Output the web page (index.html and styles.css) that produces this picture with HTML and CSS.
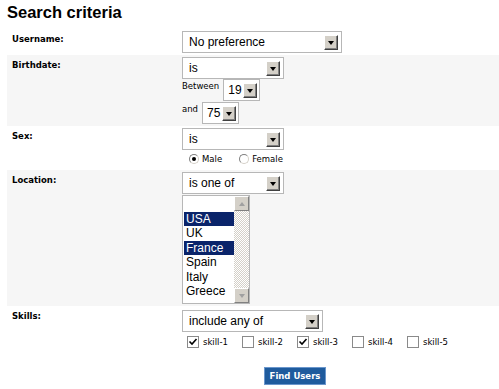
FILE: index.html
```html
<!DOCTYPE html>
<html lang="en">
<head>
  <meta charset="UTF-8">
  <title>Search criteria</title>
  <link rel="stylesheet" href="styles.css">
</head>
<body>
  <h1 class="title">Search criteria</h1>

  <table class="criteria">
    <tr>
      <th class="label">Username:</th>
      <td class="field">
        <div class="select wide"><span class="value">No preference</span><span class="arrow"></span></div>
      </td>
    </tr>
    <tr class="alt">
      <th class="label">Birthdate:</th>
      <td class="field">
        <div class="select mid"><span class="value">is</span><span class="arrow"></span></div>
        <div class="range">
          <span class="small">Between</span>
          <div class="select tiny"><span class="value">19</span><span class="arrow"></span></div>
        </div>
        <div class="range last">
          <span class="small">and</span>
          <div class="select tiny"><span class="value">75</span><span class="arrow"></span></div>
        </div>
      </td>
    </tr>
    <tr>
      <th class="label">Sex:</th>
      <td class="field">
        <div class="select mid"><span class="value">is</span><span class="arrow"></span></div>
        <div class="choices">
          <label class="choice"><span class="radio checked"></span>Male</label>
          <label class="choice"><span class="radio"></span>Female</label>
        </div>
      </td>
    </tr>
    <tr class="alt">
      <th class="label">Location:</th>
      <td class="field">
        <div class="select mid"><span class="value">is one of</span><span class="arrow"></span></div>
        <div class="listbox">
          <ul class="options">
            <li>&nbsp;</li>
            <li class="selected">USA</li>
            <li>UK</li>
            <li class="selected">France</li>
            <li>Spain</li>
            <li>Italy</li>
            <li>Greece</li>
          </ul>
          <div class="scrollbar">
            <span class="scroll-btn up"></span>
            <span class="scroll-btn down"></span>
          </div>
        </div>
      </td>
    </tr>
    <tr class="last-row">
      <th class="label">Skills:</th>
      <td class="field">
        <div class="select long"><span class="value">include any of</span><span class="arrow"></span></div>
        <div class="skills">
          <label class="skill"><span class="check on"><svg width="10" height="10" viewBox="0 0 10 10"><path d="M1.5 4.5 L4 7 L8.5 2" fill="none" stroke="#000" stroke-width="1.6"/></svg></span>skill-1</label>
          <label class="skill"><span class="check"></span>skill-2</label>
          <label class="skill"><span class="check on"><svg width="10" height="10" viewBox="0 0 10 10"><path d="M1.5 4.5 L4 7 L8.5 2" fill="none" stroke="#000" stroke-width="1.6"/></svg></span>skill-3</label>
          <label class="skill"><span class="check"></span>skill-4</label>
          <label class="skill"><span class="check"></span>skill-5</label>
        </div>
      </td>
    </tr>
  </table>

  <div class="actions">
    <button class="find-btn" type="button">Find Users</button>
  </div>
</body>
</html>
```

FILE: styles.css
```css
body {
  margin: 0;
  padding: 2px 0 0 7px;
  background: #fff;
  color: #000;
  font-family: "DejaVu Sans", Tahoma, sans-serif;
}
.title {
  margin: 0 0 7px;
  font: bold 16.5px/20px "Liberation Sans", Arial, sans-serif;
}
.criteria {
  width: 100%;
  border-collapse: collapse;
}
.criteria tr.alt {
  background: #f6f6f6;
}
.label {
  width: 169px;
  padding: 5px 0 0 5px;
  vertical-align: top;
  text-align: left;
  font-size: 8.5px;
  line-height: 11px;
  font-weight: bold;
}
.field {
  padding: 2px 0 2px 1px;
  vertical-align: top;
}
.last-row .field {
  padding-top: 4px;
}
.select {
  display: flex;
  align-items: center;
  justify-content: space-between;
  box-sizing: border-box;
  height: 22px;
  padding: 0 3px 0 6px;
  border: 1px solid #b7b7b7;
  background: #fff;
  font: 12px "Liberation Sans", Arial, sans-serif;
}
.wide {
  width: 160px;
}
.mid {
  width: 102px;
}
.long {
  width: 141px;
}
.tiny {
  width: 37px;
  padding-left: 4px;
  padding-right: 2px;
}
.arrow {
  display: flex;
  align-items: center;
  justify-content: center;
  box-sizing: border-box;
  width: 14px;
  height: 15px;
  background: #d4d0c8;
  border: 1px solid;
  border-color: #fff #404040 #404040 #fff;
  box-shadow: inset -1px -1px #808080;
}
.arrow::after {
  content: "";
  border: 3.5px solid transparent;
  border-top: 4px solid #000;
  border-bottom: 0;
  margin: 1px 1px 0 0;
}
.range {
  display: flex;
  align-items: flex-start;
  gap: 4px;
}
.range.last {
  margin-top: 1px;
}
.small {
  font-size: 8.5px;
  line-height: 14px;
}
.choices {
  display: flex;
  gap: 17px;
  height: 18px;
  align-items: center;
  padding-left: 7px;
  font-size: 8.5px;
}
.choice {
  display: flex;
  align-items: center;
  gap: 3px;
}
.radio {
  display: flex;
  align-items: center;
  justify-content: center;
  box-sizing: border-box;
  width: 10px;
  height: 10px;
  border-radius: 50%;
  border: 1px solid;
  border-color: #808080 #d4d0c8 #d4d0c8 #808080;
  background: #fff;
}
.radio.checked::after {
  content: "";
  width: 4px;
  height: 4px;
  border-radius: 50%;
  background: #000;
}
.listbox {
  display: flex;
  box-sizing: border-box;
  width: 68px;
  height: 109px;
  margin-top: 1px;
  border: 1px solid #b7b7b7;
  background: #fff;
}
.options {
  flex: 1;
  margin: 0;
  padding: 1px 0 0 1px;
  list-style: none;
  font: 12px "Liberation Sans", Arial, sans-serif;
}
.options li {
  height: 14.5px;
  line-height: 14.5px;
  padding-left: 2px;
}
.options li.selected {
  background: #0a246a;
  color: #fff;
}
.scrollbar {
  display: flex;
  flex-direction: column;
  justify-content: space-between;
  width: 15px;
  background: repeating-conic-gradient(#d4d0c8 0 25%, #fff 0 50%) 0 0 / 2px 2px;
}
.scroll-btn {
  display: flex;
  align-items: center;
  justify-content: center;
  box-sizing: border-box;
  height: 15px;
  background: #d4d0c8;
  border: 1px solid;
  border-color: #fff #808080 #808080 #fff;
}
.scroll-btn::after {
  content: "";
  border: 3.5px solid transparent;
}
.scroll-btn.up::after {
  border-bottom: 4px solid #a0a0a0;
  border-top: 0;
}
.scroll-btn.down::after {
  border-top: 4px solid #a0a0a0;
  border-bottom: 0;
}
.skills {
  display: flex;
  height: 18px;
  align-items: center;
  padding: 1px 0 0 5px;
  font-size: 8.5px;
}
.skill {
  display: flex;
  align-items: center;
  gap: 4px;
  width: 55px;
}
.check {
  display: flex;
  align-items: center;
  justify-content: center;
  box-sizing: border-box;
  width: 12px;
  height: 12px;
  border: 1px solid #8a8a8a;
  background: #fff;
}
.actions {
  padding: 11px 0 0 257px;
}
.find-btn {
  width: 62px;
  height: 18px;
  padding: 0;
  border: 1px solid #6a96cc;
  background: #1f5b9d;
  color: #fff;
  font: bold 8.5px "DejaVu Sans", Tahoma, sans-serif;
}
```
